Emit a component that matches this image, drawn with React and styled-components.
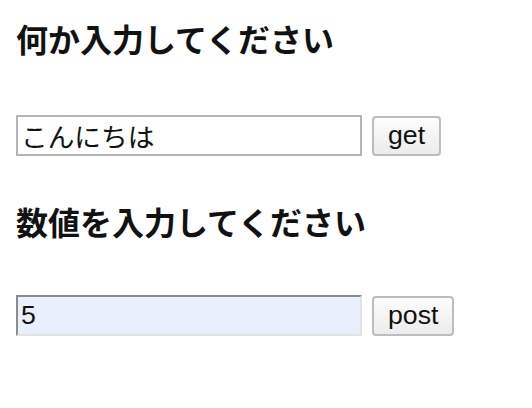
import React from 'react';
import styled, { createGlobalStyle } from 'styled-components';

const GlobalStyle = createGlobalStyle`
  html, body {
    margin: 0;
    padding: 0;
    background: #ffffff;
  }
  body {
    font-family: "Liberation Sans", "Noto Sans CJK JP", sans-serif;
    color: #000;
  }
`;

const Page = styled.div`
  padding: 18px 16px 0 16px;
  display: flex;
  flex-direction: column;
`;

const Heading = styled.h4`
  margin: 0;
  font-family: "Noto Sans CJK JP", sans-serif;
  font-size: 32px;
  font-weight: 700;
  line-height: 40px;
  color: #111;
  margin-top: ${(p) => p.$top || 0}px;
`;

const FieldRow = styled.div`
  display: flex;
  align-items: center;
  gap: 10px;
  margin-top: ${(p) => p.$top || 0}px;
`;

const TextField = styled.input`
  box-sizing: border-box;
  width: 346px;
  height: 41px;
  padding: 2px 3px;
  font-family: "Liberation Sans", "Noto Sans CJK JP", sans-serif;
  font-size: 26.7px;
  color: #111;
  outline: none;
  border-width: 2px;
  ${(p) =>
    p.$filled
      ? `
    background: #e8f0fe;
    border-style: solid;
    border-color: #8c8c8c #e2e2e2 #e2e2e2 #8c8c8c;
  `
      : `
    background: #fff;
    border-style: solid;
    border-color: #b4b4b4;
  `}
`;

const Button = styled.button`
  box-sizing: border-box;
  height: 40px;
  padding: 0 14px;
  font-family: "Liberation Sans", sans-serif;
  font-size: 26.7px;
  color: #111;
  border: 2px solid #bdbdbd;
  border-radius: 4px;
  background: linear-gradient(#fdfdfd, #ececec);
  cursor: pointer;
`;

export default function App() {
  return (
    <>
      <GlobalStyle />
      <Page>
        <Heading>何か入力してください</Heading>
        <FieldRow $top={57}>
          <TextField type="text" defaultValue="こんにちは" />
          <Button>get</Button>
        </FieldRow>
        <Heading $top={45}>数値を入力してください</Heading>
        <FieldRow $top={54}>
          <TextField type="text" $filled defaultValue="5" />
          <Button>post</Button>
        </FieldRow>
      </Page>
    </>
  );
}
